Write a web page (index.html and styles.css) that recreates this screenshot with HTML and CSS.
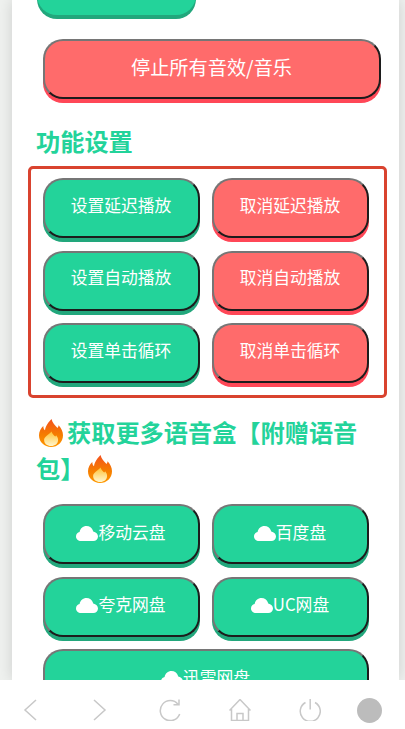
FILE: index.html
```html
<!DOCTYPE html>
<html lang="zh-CN">
<head>
<meta charset="utf-8">
<title>语音盒</title>
<link rel="stylesheet" href="styles.css">
</head>
<body>
<svg class="defs" width="0" height="0" aria-hidden="true">
  <defs>
    <symbol id="cloud" viewBox="0 0 22 15">
      <path d="M5 15C2.2 15 0 13 0 10.400 0 8.200 1.500 6.500 3.600 6 4.100 2.600 7 0 10.500 0c3 0 5.600 1.900 6.500 4.700.1.500.2.700.2.900C20 6.200 22 8.100 22 10.500 22 13 20 15 17.300 15Z" fill="#fff"/>
    </symbol>
    <linearGradient id="flameOuter" x1="0" y1="0" x2="0" y2="1">
      <stop offset="0" stop-color="#f4511e"/>
      <stop offset="0.55" stop-color="#f57c00"/>
      <stop offset="1" stop-color="#ff9800"/>
    </linearGradient>
    <linearGradient id="flameInner" x1="0" y1="0" x2="0" y2="1">
      <stop offset="0" stop-color="#ffc233"/>
      <stop offset="1" stop-color="#fff6d0"/>
    </linearGradient>
    <symbol id="flame" viewBox="0 0 24 28">
      <path d="M12.500 0C13.500 4 16 6 18.500 9c.7-.8 1-1.800 1.100-2.800C22.300 9 24 12.500 24 16.200 24 23 18.700 28 12 28S0 23 0 16.300C0 12.500 2 9.200 4.300 7c0 1.800.5 3.200 1.700 4.300C6.400 7 9.500 3 12.500 0Z" fill="url(#flameOuter)"/>
      <path d="M12.500 12.500c.6 2.200 2.200 3.500 3.700 5 .5-.4.700-.8.900-1.300 1.300 1.500 2 3 2 4.800 0 3.700-3.100 6-7 6s-7-2.300-7-6c0-3.500 4.600-5 7.400-8.500Z" fill="url(#flameInner)"/>
    </symbol>
  </defs>
</svg>
<main class="viewport">
  <div class="panel">
    <button class="btn green btn-top" type="button"></button>
    <div class="btn-row">
      <button class="btn red btn-stop" type="button"><span class="label">停止所有音效/音乐</span></button>
    </div>
    <h2 class="title title-settings">功能设置</h2>
    <section class="settings-box">
      <div class="grid">
        <button class="btn green" type="button"><span class="label">设置延迟播放</span></button>
        <button class="btn red" type="button"><span class="label">取消延迟播放</span></button>
        <button class="btn green" type="button"><span class="label">设置自动播放</span></button>
        <button class="btn red" type="button"><span class="label">取消自动播放</span></button>
        <button class="btn green" type="button"><span class="label">设置单击循环</span></button>
        <button class="btn red" type="button"><span class="label">取消单击循环</span></button>
      </div>
    </section>
    <h2 class="title title-more"><svg class="flame"><use href="#flame"/></svg>获取更多语音盒【附赠语音包】<svg class="flame flame-end"><use href="#flame"/></svg></h2>
    <div class="grid grid-links">
      <button class="btn green" type="button"><span class="label"><svg class="cloud"><use href="#cloud"/></svg>移动云盘</span></button>
      <button class="btn green" type="button"><span class="label"><svg class="cloud"><use href="#cloud"/></svg>百度盘</span></button>
      <button class="btn green" type="button"><span class="label"><svg class="cloud"><use href="#cloud"/></svg>夸克网盘</span></button>
      <button class="btn green" type="button"><span class="label"><svg class="cloud"><use href="#cloud"/></svg>UC网盘</span></button>
      <button class="btn green wide" type="button"><span class="label"><svg class="cloud"><use href="#cloud"/></svg>迅雷网盘</span></button>
    </div>
  </div>
</main>
<nav class="toolbar">
  <svg class="tool" viewBox="0 0 22 22"><path d="M17 1 6 11l11 10"/></svg>
  <svg class="tool" viewBox="0 0 22 22"><path d="M5 1l11 10L5 21"/></svg>
  <svg class="tool" viewBox="0 0 22 22"><path d="M19 5.200A10 10 0 1 0 20.700 15M20 .5V5.800H14.500"/></svg>
  <svg class="tool" viewBox="0 0 22 22"><path d="M.5 11.500 11 .5l10.500 11M2.500 10V21.500H19.500V10M8 21.500V14.500H14V21.500"/></svg>
  <svg class="tool" viewBox="0 0 22 22"><path d="M6.500 3.500a10 10 0 1 0 9.500 0M11.200 0V10.500"/></svg>
  <span class="dot"></span>
</nav>
</body>
</html>
```
FILE: styles.css
```css
* { box-sizing: border-box; }
html, body { height: 100%; margin: 0; }
body {
  display: flex;
  flex-direction: column;
  height: 729px;
  overflow: hidden;
  background: #fff;
  font-family: "Noto Sans CJK SC", "Noto Sans", sans-serif;
}
.defs { display: block; height: 0; }
.viewport {
  height: 680px;
  flex: none;
  overflow: hidden;
  padding: 0 6px 0 12px;
  background: #eff1ef;
}
.panel {
  display: flow-root;
  height: 100%;
  padding: 0 12px 0 16px;
  background: #fff;
  box-shadow: 0 0 14px rgba(0, 0, 0, 0.14);
}
.btn {
  display: block;
  width: 100%;
  height: 60px;
  padding: 0 1px 6px 0;
  border: 2px solid;
  border-color: #767676 #1c1c1c #1c1c1c #767676;
  border-radius: 20px;
  color: #fff;
  font: 400 16.800px/1 "Noto Sans CJK SC", "Noto Sans", sans-serif;
  text-align: center;
  white-space: nowrap;
}
.green { background: #23d39a; box-shadow: 0 4px 0 #22a77c; }
.red { background: #ff6b6b; box-shadow: 0 4px 0 #ff4757; }
.btn-top {
  width: 159px;
  height: 60px;
  margin: -45px 0 0 9px;
  border: 0;
}
.btn-row { padding: 24px 0 0 15px; }
.btn-stop { width: 338px; padding-bottom: 2px; font-size: 19.200px; }
.title {
  margin: 0 0 0 8px;
  color: #23d39a;
  font-size: 24.200px;
  font-weight: 700;
  line-height: 36px;
}
.title-settings { margin-top: 24px; }
.settings-box {
  width: 359px;
  height: 232px;
  margin: 7px 0 0;
  padding: 9px 0 0 12px;
  border: 3px solid #d9432f;
  border-radius: 5px;
}
.grid {
  display: grid;
  grid-template-columns: 157px 157px;
  column-gap: 12px;
  row-gap: 12.500px;
}
.title-more { margin-top: 16px; margin-right: 10px; }
.flame { width: 24px; height: 28px; vertical-align: -5px; margin: 0 4px 0 3px; }
.flame-end { margin: 0 0 0 4px; }
.grid-links { margin: 18px 0 0 15px; }
.wide { grid-column: 1 / 3; }
.grid-links .btn { padding-bottom: 4px; }
.cloud { width: 22px; height: 15px; vertical-align: -2px; }
.toolbar {
  flex: none;
  height: 49px;
  display: flex;
  align-items: center;
  gap: 48px;
  padding: 11px 0 0 19px;
  background: #fff;
}
.tool {
  flex: none;
  width: 22px;
  height: 22px;
  fill: none;
  stroke: #c8c8c8;
  stroke-width: 1.500;
}
.dot {
  flex: none;
  width: 25px;
  height: 25px;
  margin-left: -12px;
  border-radius: 50%;
  background: #bcbcbc;
}
```
